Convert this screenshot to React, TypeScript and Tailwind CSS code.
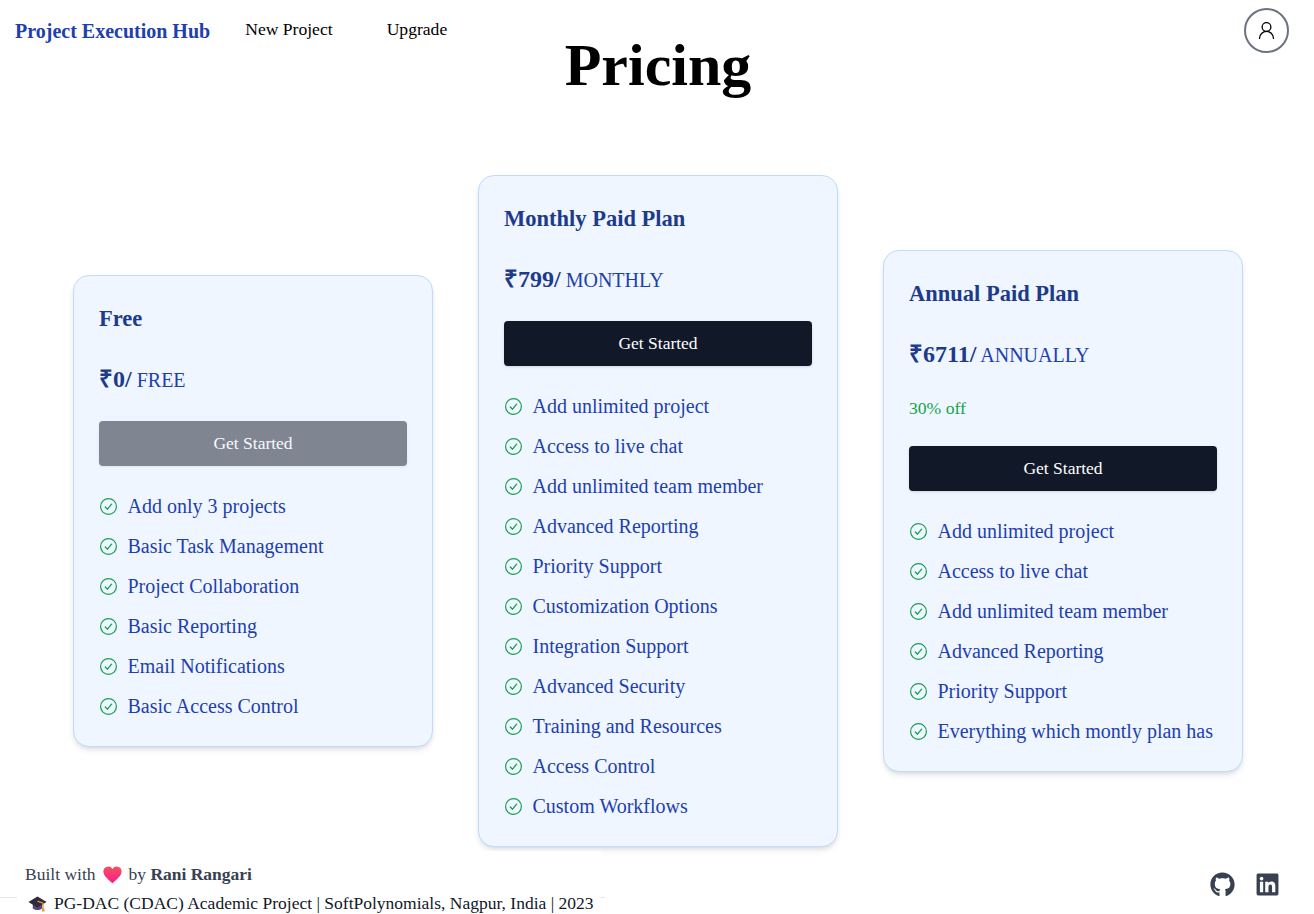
import React from 'react';
import { UserRound } from 'lucide-react';
import { FaGithub, FaLinkedin } from 'react-icons/fa';

interface Plan {
  name: string;
  price: string;
  period: string;
  discount?: string;
  disabled?: boolean;
  features: string[];
}

const PLANS: Plan[] = [
  {
    name: 'Free',
    price: '₹0/',
    period: 'FREE',
    disabled: true,
    features: [
      'Add only 3 projects',
      'Basic Task Management',
      'Project Collaboration',
      'Basic Reporting',
      'Email Notifications',
      'Basic Access Control',
    ],
  },
  {
    name: 'Monthly Paid Plan',
    price: '₹799/',
    period: 'MONTHLY',
    features: [
      'Add unlimited project',
      'Access to live chat',
      'Add unlimited team member',
      'Advanced Reporting',
      'Priority Support',
      'Customization Options',
      'Integration Support',
      'Advanced Security',
      'Training and Resources',
      'Access Control',
      'Custom Workflows',
    ],
  },
  {
    name: 'Annual Paid Plan',
    price: '₹6711/',
    period: 'ANNUALLY',
    discount: '30% off',
    features: [
      'Add unlimited project',
      'Access to live chat',
      'Add unlimited team member',
      'Advanced Reporting',
      'Priority Support',
      'Everything which montly plan has',
    ],
  },
];

const Heart = () => (
  <svg viewBox="0 0 24 24" className="mx-[7px] h-[19px] w-[19px] shrink-0">
    <defs>
      <linearGradient id="heart" x1="0" y1="0" x2="0" y2="1">
        <stop offset="0" stopColor="#f2515f" />
        <stop offset="1" stopColor="#fb1a8c" />
      </linearGradient>
    </defs>
    <path
      fill="url(#heart)"
      d="M12 23C6 18 0.500 13.500 0.500 8A6.200 6.200 0 0 1 12 5 6.200 6.200 0 0 1 23.500 8c0 5.500-5.500 10-11.500 15z"
    />
  </svg>
);

const GradCap = () => (
  <svg viewBox="0 0 24 24" className="h-[19px] w-[19px] shrink-0">
    <path fill="#5a4378" d="M6 11h12v7c-2 3-10 3-12 0z" />
    <path fill="#2f2b3c" d="M12 3l11.500 7-11.500 7L0.500 10z" />
    <path fill="none" stroke="#e8962e" strokeWidth="1.500" d="M12 9l7 2.500V19" />
    <path fill="#e8962e" d="M18 18h2.500l0.500 4h-3.500z" />
  </svg>
);

const CheckIcon = () => (
  <svg viewBox="0 0 19 19" fill="none" stroke="#16a34a" className="h-[19px] w-[19px] shrink-0">
    <circle cx="9.500" cy="9.500" r="7.900" strokeWidth="1.200" />
    <path d="M6.300 10 8.500 12.200 12.600 7.200" strokeWidth="1.300" strokeLinecap="round" strokeLinejoin="round" />
  </svg>
);

const PlanCard = ({ plan }: { plan: Plan }) => (
  <div className="w-[360px] rounded-2xl border border-[#bfdbfe] bg-[#eff6ff] px-[25px] pt-[25px] pb-[20px] shadow-md">
    <h2 className="text-[22.5px] leading-[36px] font-bold text-[#1e3a8a]">{plan.name}</h2>
    <p className="mt-[25px] text-[20px] leading-[36px] text-[#1e40af]">
      <span className="text-2xl font-bold text-[#1e3a8a]">{plan.price}</span> {plan.period}
    </p>
    {plan.discount && (
      <p className="mt-[21px] mb-[-1px] text-[17.6px] leading-[28px] text-[#16a34a]">{plan.discount}</p>
    )}
    <button
      className={
        plan.disabled
          ? 'mt-[23px] h-[45px] w-full rounded bg-[#111827] text-[17.5px] text-white opacity-50 shadow'
          : plan.discount
            ? 'mt-[25px] h-[45px] w-full rounded bg-[#111827] text-[17.5px] text-white shadow'
            : 'mt-[23px] h-[45px] w-full rounded bg-[#111827] text-[17.5px] text-white shadow'
      }
    >
      Get Started
    </button>
    <ul className="mt-[20px] flex flex-col">
      {plan.features.map((feature) => (
        <li key={feature} className="flex h-[40px] items-center gap-[9.5px] text-[20px] text-[#1e40af]">
          <CheckIcon />
          {feature}
        </li>
      ))}
    </ul>
  </div>
);

export default function App() {
  return (
    <div className="h-[914px] overflow-hidden bg-white font-['Liberation_Serif',serif] text-black">
      <nav className="flex h-[35px] items-start pr-[25px] pl-[15px]">
        <a className="mt-[17px] text-xl leading-[28px] font-bold text-[#1e40af]">Project Execution Hub</a>
        <a className="mt-[15px] ml-[35px] text-[17.6px] leading-[28px]">New Project</a>
        <a className="mt-[15px] ml-[54px] text-[17.6px] leading-[28px]">Upgrade</a>
        <button className="mt-[8px] ml-auto flex h-[45px] w-[45px] items-center justify-center rounded-full border-2 border-[#6b7280]">
          <UserRound className="mr-[1px] mb-[1px] h-[21px] w-[21px]" strokeWidth={1.5} />
        </button>
      </nav>
      <h1 className="pl-[2px] text-center text-6xl leading-[60px] font-bold">Pricing</h1>
      <main className="mt-[80px] flex h-[672px] items-center justify-center gap-[45px] pl-[2px]">
        {PLANS.map((plan) => (
          <PlanCard key={plan.name} plan={plan} />
        ))}
      </main>
      <footer className="relative mt-[4px] flex h-[63px] justify-between pr-[34px] text-[#374151]">
        <div className="absolute top-[46px] left-0 h-px w-[605px] bg-gray-200" />
        <div className="relative ml-[17px] h-full w-[584px] bg-white pl-[8px] text-[17.5px]">
          <p className="flex h-[38px] items-center pt-[8px]">
            Built with <Heart /> by&nbsp;<b>Rani Rangari</b>
          </p>
          <p className="mt-[1px] flex items-center gap-[7px] pl-[3px] text-[#111827]">
            <GradCap />
            PG-DAC (CDAC) Academic Project | SoftPolynomials, Nagpur, India | 2023
          </p>
        </div>
        <div className="flex items-start gap-[20px] pt-[21px] text-[25px]">
          <FaGithub />
          <FaLinkedin />
        </div>
      </footer>
    </div>
  );
}
